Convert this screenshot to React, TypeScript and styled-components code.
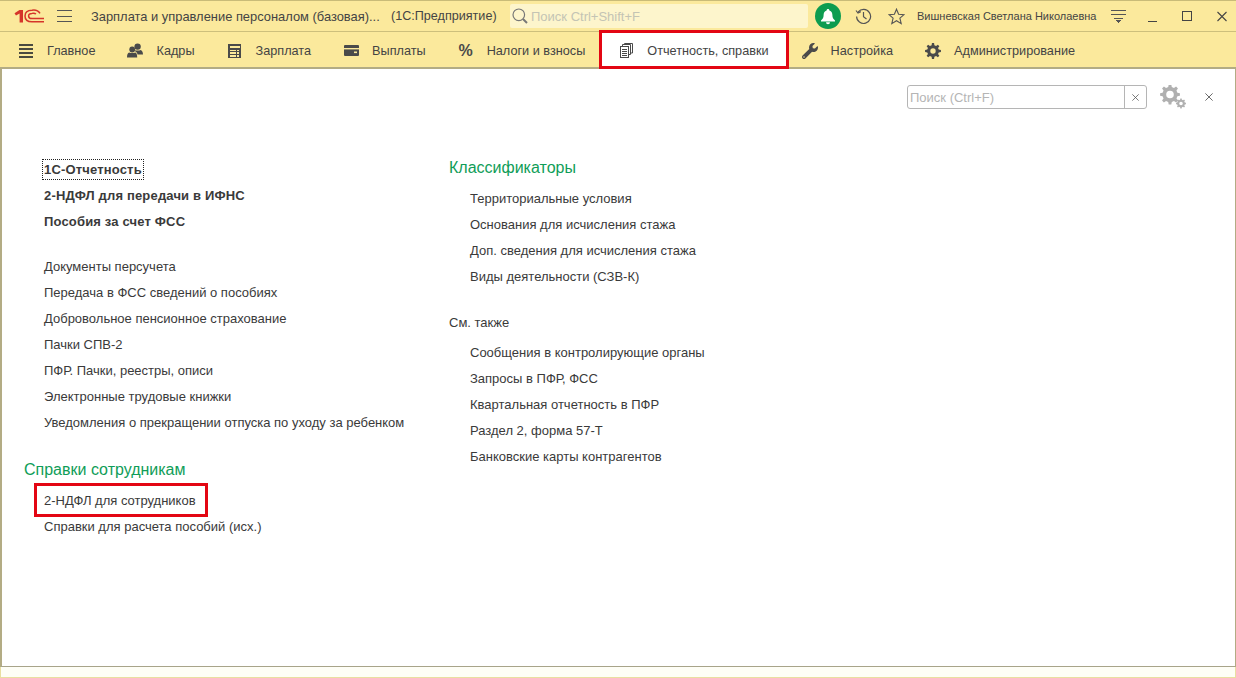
import React from "react";
import styled, { createGlobalStyle } from "styled-components";
import { FaWrench } from "react-icons/fa";

const Global = createGlobalStyle`
  html, body { margin: 0; padding: 0; background: #fff; }
  body { font-family: "Liberation Sans", Arial, sans-serif; color: #333; }
  #root { width: 1236px; height: 678px; overflow: hidden; }
`;

const Page = styled.div`
  width: 1236px;
  height: 678px;
  display: flex;
  flex-direction: column;
`;

const TitleBar = styled.header`
  height: 32px;
  flex: none;
  box-sizing: border-box;
  border-top: 1px solid #c9bb78;
  border-bottom: 1px solid #cdbf7c;
  background: #fbe99c;
  display: flex;
  align-items: center;
`;

const Logo = styled.svg`
  width: 30px;
  height: 14px;
  margin-left: 14px;
  flex: none;
`;

const IconSlot = styled.span<{ $left: number; $width: number }>`
  margin-left: ${(p) => p.$left}px;
  width: ${(p) => p.$width}px;
  flex: none;
  display: flex;
  align-items: center;
  justify-content: center;
  color: #4a4a4a;
`;

const AppName = styled.span<{ $left: number; $width: number; $size: number }>`
  margin-left: ${(p) => p.$left}px;
  width: ${(p) => p.$width}px;
  flex: none;
  white-space: nowrap;
  color: #444;
  font-size: ${(p) => p.$size}px;
`;

const GlobalSearch = styled.div`
  width: 298px;
  height: 24px;
  flex: none;
  background: #fdf5cc;
  display: flex;
  align-items: center;
  gap: 3px;
  padding-left: 2px;
  box-sizing: border-box;
  color: #c4c4b4;
  font-size: 13px;
  border-radius: 2px;
`;

const Bell = styled.span`
  margin-left: 7px;
  width: 26px;
  height: 26px;
  flex: none;
  border-radius: 50%;
  background: #0d9c50;
  display: flex;
  align-items: center;
  justify-content: center;
`;

const UserName = styled.span`
  margin-left: 12px;
  width: 180px;
  flex: none;
  font-size: 11px;
  white-space: nowrap;
  color: #444;
`;

const Nav = styled.nav`
  height: 37px;
  flex: none;
  box-sizing: border-box;
  background: #fbe99c;
  border-bottom: 2px solid #b3ac84;
  display: flex;
  padding-left: 2px;
`;

const NavItem = styled.div<{ $active?: boolean }>`
  position: relative;
  display: flex;
  align-items: center;
  padding: 2px ${(p) => (p.$active ? 17 : 16)}px 0;
  color: #444;
  font-size: 12.7px;
  white-space: nowrap;
  background: ${(p) => (p.$active ? "#fff" : "transparent")};
  ${(p) =>
    p.$active
      ? `&::after {
          content: "";
          position: absolute;
          left: -2px;
          right: -3px;
          top: -2px;
          bottom: -2px;
          border: 3px solid #e30613;
        }`
      : ""}
`;

const NavIcon = styled.span`
  width: 16px;
  height: 16px;
  margin-right: 13px;
  display: flex;
  align-items: center;
  justify-content: center;
  color: #4a4a4a;
  flex: none;
`;

const PercentGlyph = styled.span`
  font-size: 16px;
  font-weight: 700;
  line-height: 16px;
  color: #4a4a4a;
`;

const Content = styled.main`
  height: 598px;
  flex: none;
  box-sizing: border-box;
  background: #fff;
  border-left: 2px solid #b3ac84;
  border-right: 1px solid #b3ac84;
  border-bottom: 1px solid #a8a48a;
  display: flex;
  flex-direction: column;
`;

const StatusStrip = styled.footer`
  flex: 1;
  box-sizing: border-box;
  background: #fefef6;
  border: 1px solid #e9dfa0;
  border-top: none;
`;

const ToolRow = styled.div`
  height: 24px;
  margin-top: 16px;
  display: flex;
  justify-content: flex-end;
  align-items: center;
  flex: none;
`;

const SearchBox = styled.div`
  width: 240px;
  height: 24px;
  box-sizing: border-box;
  border: 1px solid #b5b5b5;
  border-radius: 3px;
  display: flex;
  align-items: center;
  color: #b5b5b5;
  font-size: 13px;
`;

const SearchField = styled.span`
  flex: 1;
  padding-left: 2px;
`;

const SearchClear = styled.span`
  width: 21px;
  height: 100%;
  border-left: 1px solid #b5b5b5;
  display: flex;
  align-items: center;
  justify-content: center;
`;

const GearSlot = styled.span`
  margin-left: 13px;
  width: 26px;
  height: 24px;
  display: flex;
  flex: none;
`;

const CloseSlot = styled.span`
  margin-left: 19px;
  margin-right: 22px;
  width: 8px;
  display: flex;
  flex: none;
`;

const Columns = styled.div`
  display: grid;
  grid-template-columns: 425px 1fr;
  margin-top: 47px;
  padding-left: 22px;
`;

const Column = styled.div`
  display: flex;
  flex-direction: column;
`;

const LinkGroup = styled.div<{ $top?: number; $indent?: number }>`
  display: flex;
  flex-direction: column;
  margin-top: ${(p) => p.$top ?? 0}px;
  padding-left: ${(p) => p.$indent ?? 20}px;
`;

const LinkRow = styled.div<{ $bold?: boolean }>`
  height: 26px;
  display: flex;
  align-items: center;
  font-size: 13px;
  letter-spacing: ${(p) => (p.$bold ? "0.17px" : "0")};
  font-weight: ${(p) => (p.$bold ? 700 : 400)};
  color: #3a3a3a;
  white-space: nowrap;
`;

const Focused = styled.span`
  outline: 1px dotted #222;
  outline-offset: 1px;
  padding: 1px 0;
`;

const Marked = styled.span`
  position: relative;
  &::after {
    content: "";
    position: absolute;
    left: -10px;
    right: -12px;
    top: -10px;
    bottom: -9px;
    border: 3px solid #e30613;
  }
`;

const SectionTitle = styled.h2<{ $top?: number }>`
  margin: ${(p) => p.$top ?? 0}px 0 0;
  height: 24px;
  line-height: 24px;
  font-size: 16px;
  font-weight: 400;
  color: #0f9d58;
  white-space: nowrap;
`;

const SubTitle = styled.h3`
  margin: 21px 0 0;
  height: 26px;
  line-height: 26px;
  font-size: 13px;
  font-weight: 400;
  color: #3a3a3a;
`;

const LogoMark = () => (
  <Logo viewBox="0 0 30 14">
    <path d="M0.5 4.2 L5.5 1 H9 V13.5 H5.6 V4.6 L2 6.6 Z" fill="#d5352a" />
    <path d="M26 4.3 A7.4 6 0 0 0 18 1.2 C13.6 1.2 11 3.6 11 7 C11 10.4 13.6 12.8 18 12.8 H30" fill="none" stroke="#d5352a" strokeWidth="1.5" />
    <path d="M22 5 A3.6 2.6 0 0 0 18 4.4 C15.8 4.4 14.6 5.4 14.6 7 C14.6 8.6 15.8 9.6 18 9.6 H30" fill="none" stroke="#d5352a" strokeWidth="1.5" />
  </Logo>
);

const Burger = () => (
  <svg width="15" height="12" viewBox="0 0 15 12" shapeRendering="crispEdges">
    <path d="M0 0.5 H15 M0 6 H15 M0 11.5 H15" stroke="#555" strokeWidth="1" />
  </svg>
);

const MagnifierIcon = () => (
  <svg width="16" height="16" viewBox="0 0 16 16" fill="none" stroke="#777" strokeWidth="1.2">
    <circle cx="6.8" cy="6.8" r="5.8" />
    <path d="M11 11 L15 15" strokeWidth="2" />
  </svg>
);

const BellIcon = () => (
  <svg width="16" height="17" viewBox="0 0 16 17" fill="#fff">
    <path d="M8 1 C9 1 9.4 1.7 9.4 2.4 C11.6 3.1 12.4 5 12.4 7.3 C12.4 9.6 13.2 11 15 12.6 V13.4 H1 V12.6 C2.8 11 3.6 9.6 3.6 7.3 C3.6 5 4.4 3.1 6.6 2.4 C6.6 1.7 7 1 8 1 Z" />
    <path d="M6 14.3 H10 A2 2 0 0 1 6 14.3 Z" />
  </svg>
);

const HistoryIcon = () => (
  <svg width="17" height="17" viewBox="0 0 17 17" fill="none" stroke="#555" strokeWidth="1.2">
    <path d="M3.2 4 A7 7 0 1 1 1.6 8.5" />
    <path d="M1 2.5 L3 5 L5.8 3.6" />
    <path d="M8.5 4 V8.8 L11.5 11" />
  </svg>
);

const StarIcon = () => (
  <svg width="17" height="17" viewBox="0 0 17 17" fill="none" stroke="#555" strokeWidth="1.1">
    <path d="M8.5 1.2 L10.6 6.3 L16 6.7 L11.9 10.2 L13.2 15.6 L8.5 12.7 L3.8 15.6 L5.1 10.2 L1 6.7 L6.4 6.3 Z" />
  </svg>
);

const FilterIcon = () => (
  <svg width="15" height="14" viewBox="0 0 15 14" shapeRendering="crispEdges">
    <path d="M0 1.5 H15 M0 5.5 H15" stroke="#555" strokeWidth="1" />
    <path d="M3 9.5 H12" stroke="#555" strokeWidth="1" />
    <path d="M5 11 H10 L7.5 14 Z" fill="#555" />
  </svg>
);

const MinimizeIcon = () => (
  <svg width="9" height="14" viewBox="0 0 9 14" shapeRendering="crispEdges">
    <path d="M0 12.5 H9" stroke="#444" strokeWidth="1" />
  </svg>
);

const MaximizeIcon = () => (
  <svg width="10" height="10" viewBox="0 0 10 10" shapeRendering="crispEdges">
    <rect x="0.5" y="0.5" width="9" height="9" fill="none" stroke="#444" strokeWidth="1" />
  </svg>
);

const CrossIcon = ({ size, color }: { size: number; color: string }) => (
  <svg width={size} height={size} viewBox="0 0 10 10">
    <path d="M0.5 0.5 L9.5 9.5 M9.5 0.5 L0.5 9.5" stroke={color} strokeWidth="1.1" />
  </svg>
);

const MainMenuIcon = () => (
  <svg width="14" height="14" viewBox="0 0 14 14" shapeRendering="crispEdges">
    <path d="M0 1 H14 M0 5 H14 M0 9 H14 M0 13 H14" stroke="#4a4a40" strokeWidth="2" />
  </svg>
);

const PeopleIcon = () => (
  <svg width="16" height="15" viewBox="0 0 16 15" fill="#4a4a4a">
    <circle cx="10.6" cy="3.6" r="3.2" />
    <path d="M7.5 7 C8.5 7.8 12.5 7.8 13.5 7 C15 7.6 16 8.8 16 11.5 H10.5 C10.4 10 9.4 8.8 7.8 8 Z" />
    <circle cx="5.2" cy="6.5" r="2.9" />
    <path d="M2.2 9.4 C3.2 10.2 7.2 10.2 8.2 9.4 C9.6 10 10.2 11.4 10.2 14.5 H0 C0 11.4 0.8 10 2.2 9.4 Z" />
  </svg>
);

const CalcIcon = () => (
  <svg width="13" height="14" viewBox="0 0 13 14" shapeRendering="crispEdges">
    <path fillRule="evenodd" fill="#4a4a4a" d="M0 0 H13 V14 H0 Z M1.5 1.5 V4 H11.5 V1.5 Z M2 5.5 V7.2 H4.5 V5.5 Z M5.3 5.5 V7.2 H7.8 V5.5 Z M8.6 5.5 V7.2 H11 V5.5 Z M2 8.2 V9.9 H4.5 V8.2 Z M5.3 8.2 V9.9 H7.8 V8.2 Z M8.6 8.2 V9.9 H11 V8.2 Z M2 10.9 V12.6 H4.5 V10.9 Z M5.3 10.9 V12.6 H7.8 V10.9 Z M8.6 10.9 V12.6 H11 V10.9 Z" />
  </svg>
);

const WalletIcon = () => (
  <svg width="15" height="11" viewBox="0 0 15 11">
    <rect width="15" height="11" rx="1" fill="#4a4a4a" />
    <rect y="3" width="15" height="1.4" fill="#fbe99c" />
    <rect x="10" y="6.5" width="3" height="1.6" fill="#fbe99c" />
  </svg>
);

const DocsIcon = () => (
  <svg width="13" height="15" viewBox="0 0 13 15" fill="none" stroke="#4a4a4a" strokeWidth="1">
    <rect x="0.5" y="3.5" width="8" height="11" fill="#fff" />
    <path d="M2.5 3.5 V1.5 H10.5 V11.5 H8.5 M4.5 1.5 V0.5 H12.5 V10 H10.5" />
    <path d="M2 6.5 H7 M2 8.5 H7 M2 10.5 H7 M2 12.5 H7" />
  </svg>
);

const gearPath = (cx: number, cy: number, outer: number, inner: number, hole: number, teeth: number) => {
  const pt = (r: number, a: number) =>
    `${(cx + r * Math.cos(a)).toFixed(2)} ${(cy + r * Math.sin(a)).toFixed(2)}`;
  const step = (Math.PI * 2) / teeth;
  let d = "";
  for (let i = 0; i < teeth; i++) {
    const a = i * step;
    d += `${i === 0 ? "M" : "L"}${pt(inner, a - step * 0.3)} L${pt(outer, a - step * 0.17)} L${pt(outer, a + step * 0.17)} L${pt(inner, a + step * 0.3)} `;
  }
  d += "Z ";
  d += `M${cx + hole} ${cy} A${hole} ${hole} 0 1 0 ${cx - hole} ${cy} A${hole} ${hole} 0 1 0 ${cx + hole} ${cy} Z`;
  return d;
};

const GearIcon = () => (
  <svg width="16" height="16" viewBox="0 0 16 16">
    <path fillRule="evenodd" fill="#4a4a4a" d={gearPath(8, 8, 8, 5.9, 2.7, 8)} />
  </svg>
);

const Gears = () => (
  <svg width="26" height="24" viewBox="0 0 26 24">
    <path fillRule="evenodd" fill="#b0b0b0" d={gearPath(10, 9.5, 10, 7.6, 3.8, 8)} />
    <path fillRule="evenodd" fill="#b0b0b0" d={gearPath(21, 18.5, 5, 3.9, 1.8, 8)} />
  </svg>
);

const Links = ({ items, bold }: { items: string[]; bold?: boolean }) => (
  <>
    {items.map((t) => (
      <LinkRow key={t} $bold={bold}>
        {t}
      </LinkRow>
    ))}
  </>
);

export default function App() {
  return (
    <Page>
      <Global />
      <TitleBar>
        <LogoMark />
        <IconSlot $left={13} $width={15}>
          <Burger />
        </IconSlot>
        <AppName $left={19} $width={300} $size={12.9}>Зарплата и управление персоналом (базовая)...</AppName>
        <AppName $left={0} $width={119} $size={12.6}>(1С:Предприятие)</AppName>
        <GlobalSearch>
          <MagnifierIcon />
          <span>Поиск Ctrl+Shift+F</span>
        </GlobalSearch>
        <Bell>
          <BellIcon />
        </Bell>
        <IconSlot $left={14} $width={17}>
          <HistoryIcon />
        </IconSlot>
        <IconSlot $left={16} $width={17}>
          <StarIcon />
        </IconSlot>
        <UserName>Вишневская Светлана Николаевна</UserName>
        <IconSlot $left={14} $width={15}>
          <FilterIcon />
        </IconSlot>
        <IconSlot $left={22} $width={9}>
          <MinimizeIcon />
        </IconSlot>
        <IconSlot $left={25} $width={10}>
          <MaximizeIcon />
        </IconSlot>
        <IconSlot $left={25} $width={10}>
          <CrossIcon size={11} color="#444" />
        </IconSlot>
      </TitleBar>
      <Nav>
        <NavItem>
          <NavIcon><MainMenuIcon /></NavIcon>Главное
        </NavItem>
        <NavItem>
          <NavIcon><PeopleIcon /></NavIcon>Кадры
        </NavItem>
        <NavItem>
          <NavIcon><CalcIcon /></NavIcon>Зарплата
        </NavItem>
        <NavItem>
          <NavIcon><WalletIcon /></NavIcon>Выплаты
        </NavItem>
        <NavItem>
          <NavIcon><PercentGlyph>%</PercentGlyph></NavIcon>Налоги и взносы
        </NavItem>
        <NavItem $active>
          <NavIcon><DocsIcon /></NavIcon>Отчетность, справки
        </NavItem>
        <NavItem>
          <NavIcon><FaWrench size={16} /></NavIcon>Настройка
        </NavItem>
        <NavItem>
          <NavIcon><GearIcon /></NavIcon>Администрирование
        </NavItem>
      </Nav>
      <Content>
        <ToolRow>
          <SearchBox>
            <SearchField>Поиск (Ctrl+F)</SearchField>
            <SearchClear><CrossIcon size={7} color="#555" /></SearchClear>
          </SearchBox>
          <GearSlot><Gears /></GearSlot>
          <CloseSlot><CrossIcon size={8} color="#555" /></CloseSlot>
        </ToolRow>
        <Columns>
          <Column>
            <LinkGroup>
              <LinkRow $bold><Focused>1С-Отчетность</Focused></LinkRow>
              <Links bold items={["2-НДФЛ для передачи в ИФНС", "Пособия за счет ФСС"]} />
            </LinkGroup>
            <LinkGroup $top={19}>
              <Links
                items={[
                  "Документы персучета",
                  "Передача в ФСС сведений о пособиях",
                  "Добровольное пенсионное страхование",
                  "Пачки СПВ-2",
                  "ПФР. Пачки, реестры, описи",
                  "Электронные трудовые книжки",
                  "Уведомления о прекращении отпуска по уходу за ребенком",
                ]}
              />
            </LinkGroup>
            <SectionTitle $top={23}>Справки сотрудникам</SectionTitle>
            <LinkGroup $top={5}>
              <LinkRow><Marked>2-НДФЛ для сотрудников</Marked></LinkRow>
              <LinkRow>Справки для расчета пособий (исх.)</LinkRow>
            </LinkGroup>
          </Column>
          <Column>
            <SectionTitle>Классификаторы</SectionTitle>
            <LinkGroup $top={5} $indent={21}>
              <Links
                items={[
                  "Территориальные условия",
                  "Основания для исчисления стажа",
                  "Доп. сведения для исчисления стажа",
                  "Виды деятельности (СЗВ-К)",
                ]}
              />
            </LinkGroup>
            <SubTitle>См. также</SubTitle>
            <LinkGroup $top={3} $indent={21}>
              <Links
                items={[
                  "Сообщения в контролирующие органы",
                  "Запросы в ПФР, ФСС",
                  "Квартальная отчетность в ПФР",
                  "Раздел 2, форма 57-Т",
                  "Банковские карты контрагентов",
                ]}
              />
            </LinkGroup>
          </Column>
        </Columns>
      </Content>
      <StatusStrip />
    </Page>
  );
}
